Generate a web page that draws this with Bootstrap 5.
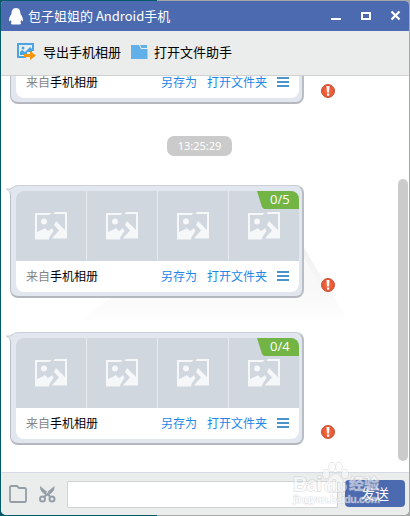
<!DOCTYPE html>
<html lang="zh-CN">
<head>
<meta charset="utf-8">
<title>包子姐姐的 Android手机</title>
<link href="https://cdn.jsdelivr.net/npm/bootstrap@5.3.0/dist/css/bootstrap.min.css" rel="stylesheet">
<script src="https://cdn.jsdelivr.net/npm/bootstrap@5.3.0/dist/js/bootstrap.bundle.min.js"></script>
<style>
body{width:410px;height:516px;overflow:hidden;font:12px/18px "Noto Sans CJK SC",sans-serif;color:#000;background:linear-gradient(90deg,#03586a 0 157px,#a5a8a6 157px)}
svg{display:block;flex:none}
.app-window{width:408px;height:514px;margin:1px;background:#fff;border-radius:4px 4px 5px 5px}
.titlebar{height:30px;background:#4c6ab0;color:#fff;font-size:13px;padding-left:8px;padding-right:8px}
.titlebar .caption{margin-left:5px}
.toolbar{height:45px;background:#ebedec;border-bottom:1px solid #d0d2d2;padding:0 0 3px 16px;font-size:13px}
.tool-label{margin-left:6px}
.tool-folder{margin-left:10px}
.chat{height:396px;position:relative}
.bubble-row{padding-left:9px;gap:17px;position:relative}
.bubble-row.cut{margin-top:-85px}
.bubble{width:294px;height:113px;border:1px solid #b9bfc7;border-top-color:#cbd0d8;border-right:2px solid #b9bec5;border-bottom:2px solid #b4b8be;border-radius:8px;background:#e2e6ee;padding:5px 3px 4px 5px;position:relative}
.tail{position:absolute;left:-5px;top:1px}
.sheet{height:101px;border-radius:8px;overflow:hidden;background:#fff;position:relative}
.tiles{height:70px;background:#e8eaed;gap:1px}
.tiles>div{background:#d0d7df;padding-top:21px}
.count{position:absolute;right:0;top:0;width:42px;height:18px;background:#73b545;clip-path:polygon(0 0,100% 0,100% 100%,7px 100%,5px 16px);color:#fff;font:13px/17px "Open Sans","Noto Sans",sans-serif;padding-left:13px}
.meta{height:31px;padding:0 10px 2px 10px}
.meta a{color:#2387e8}
.menu-link{margin:0 10px}
.from{color:#858585}
.warn{margin-bottom:6px}
.stamp{width:65px;height:20px;border-radius:7px;background:#cbcbcb;color:#fff;font:11px/20px "Noto Sans",sans-serif;margin:32px 0 29px 166px}
.gap-card{margin-top:34px}
.scroll-thumb{position:absolute;right:1px;top:103px;width:10px;height:282px;border-radius:5px;background:#cbcbcb}
.backdrop-art{position:absolute;left:80px;top:160px}
.composer{height:43px;background:#ebedec;border-top:1px solid #d5dae6;padding:0 4px 0 8px;border-radius:0 0 5px 5px;position:relative}
.cut-icon{margin-left:12px}
.composer .form-control{width:271px;height:27px;border:1px solid #d0d3d4;border-radius:1px;margin-left:11px;padding:0;flex:none}
.send,.send:hover{width:60px;height:27px;border-radius:4px;background:#4c6ab0;color:#fff;font-size:14px;line-height:26px;padding:0;border:0;margin:0 0 2px auto}
.watermark{position:absolute;left:290px;top:-13px}
</style>
</head>
<body>
<svg width="0" height="0" class="position-absolute">
  <defs>
    <radialGradient id="red"><stop offset="0" stop-color="#ff7043"/><stop offset="1" stop-color="#e05233"/></radialGradient>
    <symbol id="warning" viewBox="0 0 14 14"><circle cx="7" cy="7" r="6.500" fill="url(#red)" stroke="#c8553c"/><path fill="#fff" d="M5.500 2H8.500L8 8.500H6ZM6 9.500H8.200V11.700H6Z"/></symbol>
    <symbol id="photo" viewBox="0 0 32 28"><path fill="#f5f7f9" d="M0 1H16.500L14.500 3H2V20L9.500 16.500L13 19.500L17 16L18.500 19L14.500 25L14 27.500H0ZM20 0H32V26.500H17L18 25L24 18.500L19 13L21 9L30 18V2H18.500ZM0 26.500L9.500 16L13 19L17 16.500L18.500 19L14.500 25L14 27.500Z"/><circle cx="9" cy="9.500" r="3" fill="#f5f7f9"/></symbol>
    <symbol id="menu" viewBox="0 0 12 10"><path fill="#4b94ca" d="M0 0H12V2H0ZM0 4H12V6H0ZM0 8H12V10H0Z"/></symbol>
    <symbol id="tip" viewBox="0 0 10 9"><path fill="#e2e6ee" d="M0 2H4L8 0H10V8H5C5 5 3 4 0 2Z"/><path fill="none" stroke="#c3c9d1" d="M7 .5L4 2H.5C3 4 4.500 5 4.500 8"/></symbol>
  </defs>
</svg>
<div class="app-window d-flex flex-column overflow-hidden">
  <header class="titlebar d-flex align-items-center">
    <svg width="14" height="17" viewBox="0 0 14 17"><path fill="#fff" d="M7 0C3.500 0 2.500 3 2.500 6C1 8 0 10 0 12.500C.3 14 1 13 1.600 12L2.500 14C1.500 15 2 16.500 3.500 16.500H10.500C12 16.500 12.500 15 11.500 14L12.400 12C13 13 13.700 14 14 12.500C14 10 13 8 11.500 6C11.500 3 10.500 0 7 0Z"/></svg>
    <span class="caption">包子姐姐的 Android手机</span>
    <svg class="ms-auto" width="70" height="14" viewBox="0 0 70 14"><path fill="#fff" d="M0 9H10V11H0Z"/><path fill="none" stroke="#fff" stroke-width="2" d="M31 4H39V10H31Z"/><path fill="none" stroke="#fff" stroke-width="2.200" d="M60.500 2.500L68.500 10.500M68.500 2.500L60.500 10.500"/></svg>
  </header>
  <nav class="toolbar d-flex align-items-center">
    <svg width="20" height="17" viewBox="0 0 20 17"><path fill="none" stroke="#4ba5e5" stroke-width="2" d="M9 14H1V1H16V8"/><circle cx="6" cy="5" r="1.500" fill="#4ba5e5"/><path fill="#4ba5e5" d="M3 12V9L5 7L8 9L13 4L15 6V9H10V12Z"/><path fill="#f5960a" d="M7 11H13V8L19 12.500L13 17V14H7Z"/></svg>
    <span class="tool-label">导出手机相册</span>
    <svg class="tool-folder" width="17" height="14" viewBox="0 0 17 14"><path fill="#62b0ea" d="M0 0H8L10 4H16.500V14H0Z"/><path fill="#62b0ea" d="M9 0H16V3H10.500Z"/></svg>
    <span class="tool-label">打开文件助手</span>
  </nav>
  <main class="chat overflow-hidden">
    <svg class="backdrop-art" width="270" height="90" viewBox="0 0 270 90"><defs><linearGradient id="haze" x2="0" y2="1"><stop offset="0" stop-color="#f0f0f0"/><stop offset="1" stop-color="#fefefe"/></linearGradient></defs><path fill="url(#haze)" d="M0 85C30 55 80 30 222 10L267 85Z"/><path fill="#f8f8f8" d="M222 20L237 46L222 54Z"/></svg>
    <div class="bubble-row cut d-flex align-items-end">
      <section class="bubble">
        <div class="sheet">
          <div class="tiles"></div>
          <div class="meta d-flex align-items-center"><span class="from">来自</span><span>手机相册</span><a class="ms-auto text-decoration-none">另存为</a><a class="text-decoration-none menu-link">打开文件夹</a><svg width="12" height="10"><use href="#menu"/></svg></div>
        </div>
      </section>
      <svg class="warn" width="14" height="14"><use href="#warning"/></svg>
    </div>
    <div class="stamp text-center">13:25:29</div>
    <div class="bubble-row d-flex align-items-end">
      <section class="bubble">
        <svg class="tail" width="10" height="9"><use href="#tip"/></svg>
        <div class="sheet">
          <div class="tiles d-flex">
            <div class="flex-fill d-flex justify-content-center"><svg width="32" height="28"><use href="#photo"/></svg></div>
            <div class="flex-fill d-flex justify-content-center"><svg width="32" height="28"><use href="#photo"/></svg></div>
            <div class="flex-fill d-flex justify-content-center"><svg width="32" height="28"><use href="#photo"/></svg></div>
            <div class="flex-fill d-flex justify-content-center"><svg width="32" height="28"><use href="#photo"/></svg></div>
          </div>
          <span class="count">0/5</span>
          <div class="meta d-flex align-items-center"><span class="from">来自</span><span>手机相册</span><a class="ms-auto text-decoration-none">另存为</a><a class="text-decoration-none menu-link">打开文件夹</a><svg width="12" height="10"><use href="#menu"/></svg></div>
        </div>
      </section>
      <svg class="warn" width="14" height="14"><use href="#warning"/></svg>
    </div>
    <div class="bubble-row gap-card d-flex align-items-end">
      <section class="bubble">
        <svg class="tail" width="10" height="9"><use href="#tip"/></svg>
        <div class="sheet">
          <div class="tiles d-flex">
            <div class="flex-fill d-flex justify-content-center"><svg width="32" height="28"><use href="#photo"/></svg></div>
            <div class="flex-fill d-flex justify-content-center"><svg width="32" height="28"><use href="#photo"/></svg></div>
            <div class="flex-fill d-flex justify-content-center"><svg width="32" height="28"><use href="#photo"/></svg></div>
            <div class="flex-fill d-flex justify-content-center"><svg width="32" height="28"><use href="#photo"/></svg></div>
          </div>
          <span class="count">0/4</span>
          <div class="meta d-flex align-items-center"><span class="from">来自</span><span>手机相册</span><a class="ms-auto text-decoration-none">另存为</a><a class="text-decoration-none menu-link">打开文件夹</a><svg width="12" height="10"><use href="#menu"/></svg></div>
        </div>
      </section>
      <svg class="warn" width="14" height="14"><use href="#warning"/></svg>
    </div>
    <div class="scroll-thumb"></div>
  </main>
  <footer class="composer d-flex align-items-center">
    <svg width="18" height="18" viewBox="0 0 18 18"><path fill="none" stroke="#949ea7" stroke-width="1.800" stroke-linejoin="round" d="M2 1H8L10 3H16L17 4V16L16 17H2L1 16V2Z"/></svg>
    <svg class="cut-icon" width="17" height="17" viewBox="0 0 17 17"><g fill="none" stroke="#949ea7" stroke-width="2"><circle cx="3.500" cy="13" r="2.500"/><circle cx="13" cy="13" r="2.500"/><path d="M5 11L8.500 8L11.500 11"/></g><path fill="#949ea7" d="M1 0L9.500 7L7.500 10L3 6C1 4 1 2 1 0ZM15.500 0L7 7L9 10L13.500 6C15.500 4 15.500 2 15.500 0Z"/></svg>
    <input class="form-control" type="text" aria-label="消息">
    <button class="btn send">发送</button>
    <svg class="watermark" width="95" height="50" viewBox="0 0 95 50" font-family="Liberation Sans,Noto Sans CJK SC,sans-serif" font-weight="bold" stroke="#b9bec5" stroke-width="1" paint-order="stroke" opacity=".6">
      <g fill="#fafafa"><ellipse cx="35" cy="14" rx="3" ry="4.500"/><ellipse cx="41" cy="7" rx="3" ry="4.500"/><ellipse cx="48" cy="7" rx="3" ry="4.500"/><ellipse cx="54" cy="14" rx="3" ry="4.500"/><path d="M45 14C40 14 39 20 35 23C31 28 35 33 40 32H49C54 33 58 28 54 23C50 20 50 14 45 14Z"/><text x="2" y="31" font-size="20" textLength="29">Bai</text><text x="36" y="31" font-size="15" textLength="19">du</text><text x="58" y="29" font-size="15" textLength="30">经验</text><text x="2" y="43" font-size="10.500" stroke-width=".7" textLength="87">jingyan.baidu.com</text></g>
    </svg>
  </footer>
</div>
</body>
</html>
